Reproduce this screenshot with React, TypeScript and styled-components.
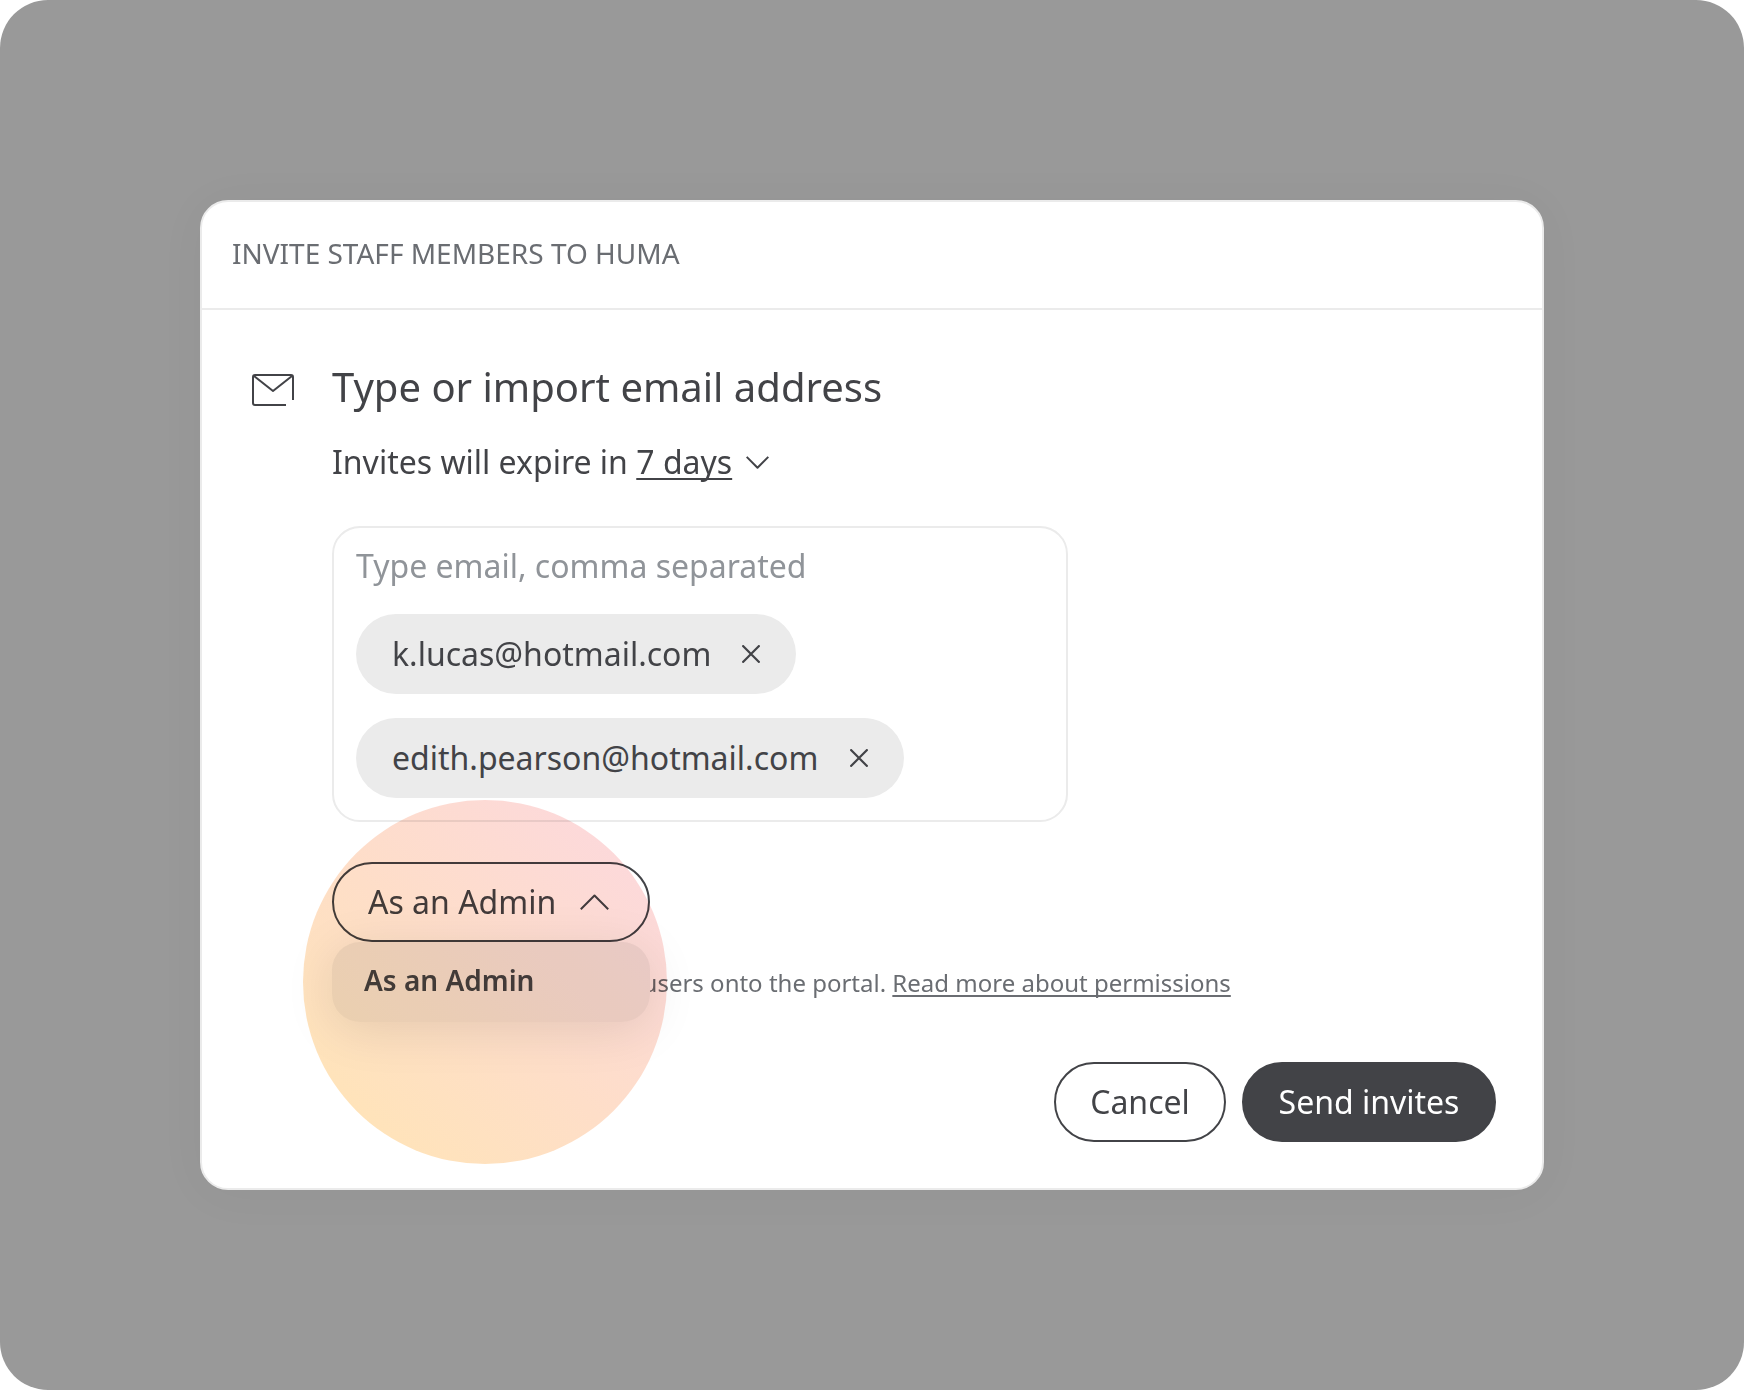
import React from "react";
import styled, { createGlobalStyle } from "styled-components";

const ink = "#424347";
const line = "#ebebeb";

const GlobalStyle = createGlobalStyle`
  *, *::before, *::after { box-sizing: border-box; }
  body { margin: 0; background: #fff; }
  button { font: inherit; color: inherit; background: none; border: 0; padding: 0; }
  svg { display: block; flex: none; }
`;

const Backdrop = styled.div`
  display: flex;
  align-items: center;
  justify-content: center;
  width: 1744px;
  height: 1390px;
  border-radius: 48px;
  background: #999;
  color: ${ink};
  font-family: "Noto Sans", "Open Sans", sans-serif;
  font-size: 32px;
  line-height: 44px;
  white-space: nowrap;
`;

const Modal = styled.section`
  position: relative;
  isolation: isolate;
  width: 1344px;
  height: 990px;
  border: 2px solid ${line};
  border-radius: 28px;
  background: #fff;
  box-shadow: 0 4px 50px rgba(0, 0, 0, 0.04);
`;

const Header = styled.header`
  height: 108px;
  padding: 32px 30px 0;
  border-bottom: 2px solid ${line};
  color: #6a6d72;
  font-size: 28px;
  line-height: 38px;
`;

const Body = styled.div`
  display: grid;
  grid-template-columns: 80px 1fr;
  padding: 50px 46px 0 50px;
`;

const IconCell = styled.div`
  padding-top: 14px;
`;

const Content = styled.div`
  display: flex;
  flex-direction: column;
  align-items: flex-start;
`;

const Title = styled.h1`
  margin: 0 0 26px;
  font-size: 40px;
  font-weight: 400;
  line-height: 54px;
`;

const Expiry = styled.div`
  display: flex;
  align-items: center;
  margin-bottom: 42px;
`;

const Days = styled.span`
  margin: 0 13.5px 0 8.4px;
  text-decoration: underline;
  text-decoration-thickness: 2px;
  text-decoration-skip-ink: none;
  text-underline-offset: 4px;
`;

const EmailBox = styled.div`
  display: flex;
  flex-direction: column;
  align-items: flex-start;
  gap: 24px;
  width: 736px;
  height: 296px;
  margin-bottom: 40px;
  padding: 16px 22px 22px;
  border: 2px solid ${line};
  border-radius: 28px;
`;

const Placeholder = styled.span`
  margin-bottom: 2px;
  color: #909499;
`;

const Chip = styled.div<{ $width: number }>`
  display: flex;
  align-items: center;
  justify-content: space-between;
  width: ${(p) => p.$width}px;
  height: 80px;
  padding: 0 36px;
  border-radius: 40px;
  background: ${line};
`;

const RoleSelect = styled.div`
  position: relative;
  z-index: 1;
  width: 318px;
  margin-bottom: 25px;
`;

const RoleButton = styled.button`
  display: flex;
  align-items: center;
  justify-content: space-between;
  width: 100%;
  height: 80px;
  padding: 0 39.5px 0 34px;
  border: 2px solid ${ink};
  border-radius: 40px;
`;

const RoleMenu = styled.div`
  position: absolute;
  top: 100%;
  left: 0;
  display: flex;
  align-items: center;
  width: 100%;
  height: 80px;
  padding: 0 32px 4px;
  border-radius: 28px;
  background: ${line};
  box-shadow: 0 8px 50px rgba(0, 0, 0, 0.1);
  font-size: 28px;
  font-weight: 600;
`;

const Note = styled.p`
  margin: 0 0 63px 310.6px;
  color: #6a6d72;
  font-size: 24px;
  line-height: 32px;
`;

const NoteLink = styled.span`
  text-decoration: underline;
  text-decoration-thickness: 1.5px;
  text-decoration-skip-ink: none;
  text-underline-offset: 2.5px;
`;

const Actions = styled.div`
  display: flex;
  gap: 16px;
  align-self: flex-end;
`;

const Action = styled.button<{ $primary?: boolean }>`
  width: ${(p) => (p.$primary ? 254 : 172)}px;
  height: 80px;
  border: 2px solid ${ink};
  border-radius: 40px;
  background: ${(p) => (p.$primary ? ink : "transparent")};
  color: ${(p) => (p.$primary ? "#fff" : ink)};
`;

const Spotlight = styled.div`
  position: absolute;
  z-index: 2;
  top: 598px;
  left: 101px;
  width: 364px;
  height: 364px;
  border-radius: 50%;
  background: linear-gradient(45deg, #ffe4b8 10%, #fedec8 47%, #fcd8de 94%);
  mix-blend-mode: multiply;
  pointer-events: none;
`;

const MailIcon = () => (
  <svg width="42" height="32" viewBox="0 0 42 32" fill="none" stroke={ink} strokeWidth="2">
    <path d="M34 31H3a2 2 0 0 1-2-2V3a2 2 0 0 1 2-2h36a2 2 0 0 1 2 2v23" />
    <path d="M2 2l19 15L40 2" strokeLinejoin="round" />
  </svg>
);

const Chevron = ({ up }: { up?: boolean }) =>
  up ? (
    <svg width="29" height="16" viewBox="0 0 29 16" fill="none" stroke={ink} strokeWidth="2">
      <path d="M.8 15.2L14.5 1.5l13.7 13.7" strokeLinejoin="round" />
    </svg>
  ) : (
    <svg width="23" height="13" viewBox="0 0 23 13" fill="none" stroke={ink} strokeWidth="2">
      <path d="M.7 .9l10.8 10.8L22.3 .9" strokeLinejoin="round" />
    </svg>
  );

const Cross = () => (
  <svg width="18" height="18" viewBox="0 0 18 18" fill="none" stroke={ink} strokeWidth="2.2">
    <path d="M.4 .4l17.2 17.2M17.6 .4L.4 17.6" />
  </svg>
);

const emails = [
  { address: "k.lucas@hotmail.com", width: 440 },
  { address: "edith.pearson@hotmail.com", width: 548 },
];

export default function App() {
  return (
    <>
      <GlobalStyle />
      <Backdrop>
        <Modal>
          <Header>INVITE STAFF MEMBERS TO HUMA</Header>
          <Body>
            <IconCell>
              <MailIcon />
            </IconCell>
            <Content>
              <Title>Type or import email address</Title>
              <Expiry>
                Invites will expire in <Days>7 days</Days>
                <Chevron />
              </Expiry>
              <EmailBox>
                <Placeholder>Type email, comma separated</Placeholder>
                {emails.map((e) => (
                  <Chip key={e.address} $width={e.width}>
                    {e.address}
                    <Cross />
                  </Chip>
                ))}
              </EmailBox>
              <RoleSelect>
                <RoleButton>
                  As an Admin
                  <Chevron up />
                </RoleButton>
                <RoleMenu>As an Admin</RoleMenu>
              </RoleSelect>
              <Note>
                users onto the portal. <NoteLink>Read more about permissions</NoteLink>
              </Note>
              <Actions>
                <Action>Cancel</Action>
                <Action $primary>Send invites</Action>
              </Actions>
            </Content>
          </Body>
          <Spotlight />
        </Modal>
      </Backdrop>
    </>
  );
}
